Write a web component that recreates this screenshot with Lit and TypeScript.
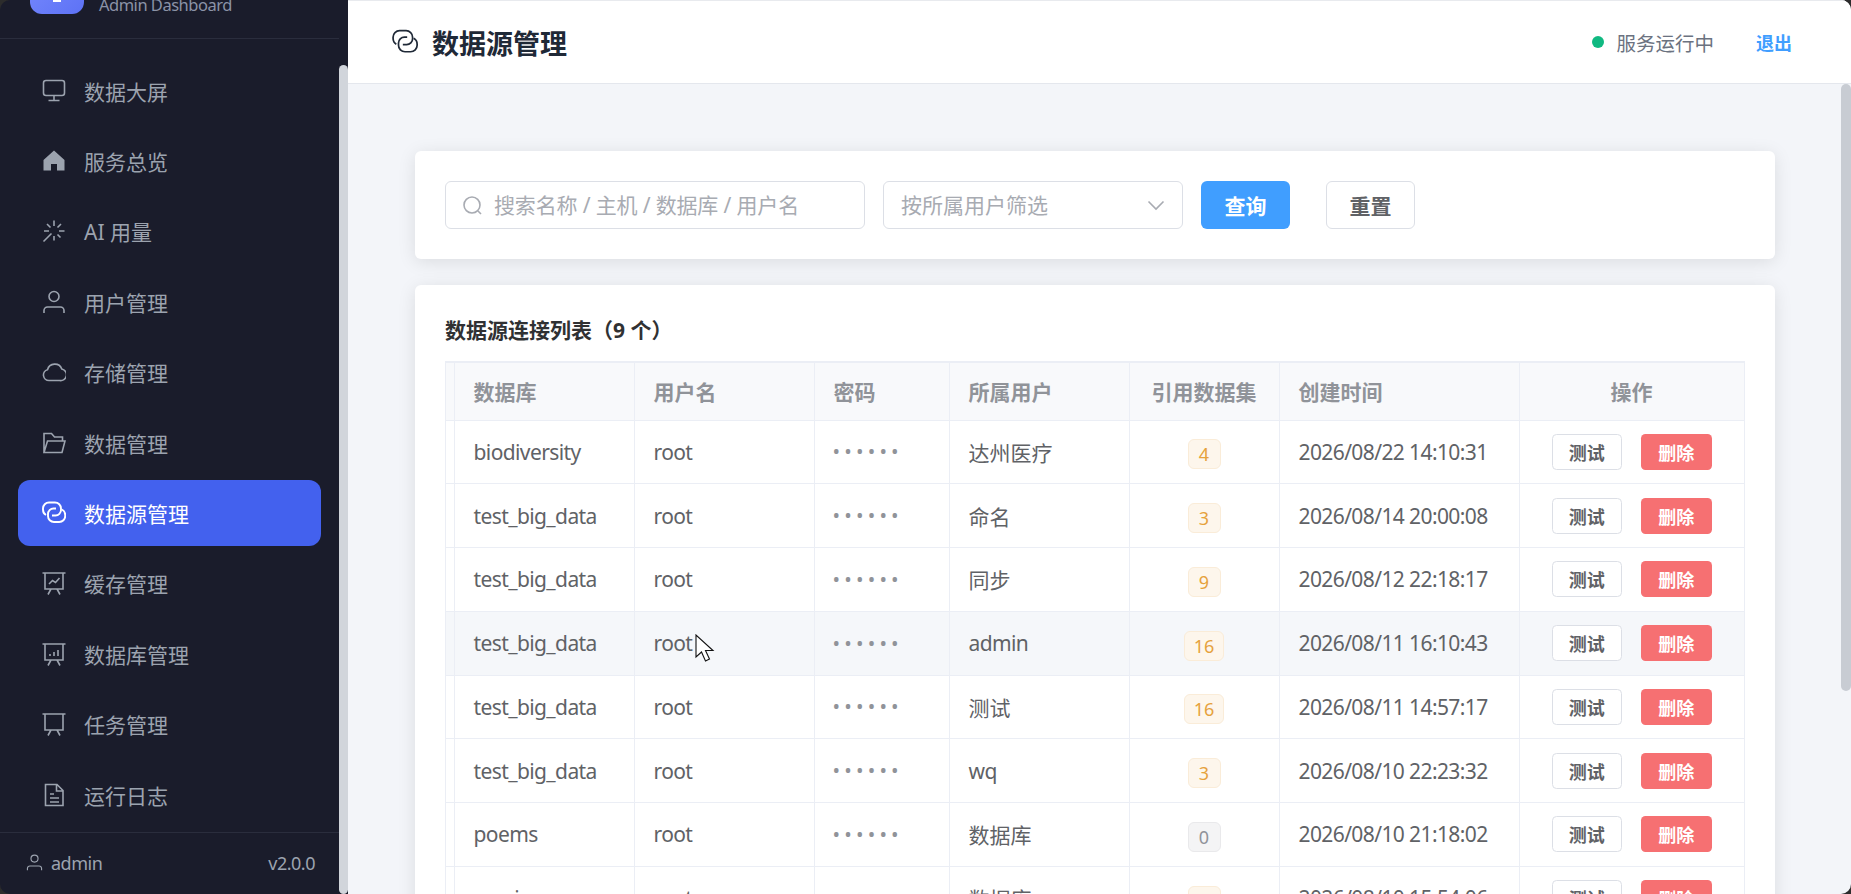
import { LitElement, html, css, svg } from 'lit';
import { customElement } from 'lit/decorators.js';

const ICONS: Record<string, unknown> = {
  screen: svg`<rect x="1.5" y="1.5" width="21" height="15" rx="2.5"/><path d="M12 16.5V21M6.5 21.5h11"/>`,
  home: svg`<path class="solid" d="M12 1.5 22.5 11v10.5H15V15H9v6.5H1.5V11z"/>`,
  spark: svg`<path d="M12 1.5V7M12 17v4.5M17 12h5.5M2 12h5M15.5 8.5 19 5M5 5l3.5 3.500M15.500 15.500 18.500 18.500M9.500 14.500 1.500 22.500"/>`,
  user: svg`<circle cx="12" cy="6.5" r="5"/><path d="M2 23v-2.500a3.500 3.500 0 0 1 3.500-3.500h13a3.500 3.500 0 0 1 3.500 3.500V23"/>`,
  cloud: svg`<path d="M7 20.500a5.500 5.500 0 0 1-1.500-10.800A7.500 7.500 0 0 1 19.800 9 5.800 5.800 0 0 1 17.500 20.500z"/>`,
  folder: svg`<path d="M2 21.500V2.500h7.500l3 3.500H20.500v4M2 21.500h18l3-11.500H5.500z"/>`,
  link: svg`<path d="M4 14C2 13 1 11 1 8.500v-1a6 6 0 0 1 6-6h6a6 6 0 0 1 6 6V9a5.500 5.500 0 0 1-5.500 5.500H10"/><path d="M20 8.500c2 1 3.200 3 3.200 5.500v1a6 6 0 0 1-6 6H12a6 6 0 0 1-6-6v-2a5.500 5.500 0 0 1 5.500-5.500H14"/>`,
  chart: svg`<path d="M.5 2h23M3 2v16h18V2M9 18l-3 5.500M15 18l3 5.500M7 13l3.500-3.500 3 2L17.500 7"/>`,
  bars: svg`<path d="M.5 2h23M3 2v16h18V2M9 18l-3 5.500M15 18l3 5.500M8 14v-2M12 14v-4M16 14V8"/>`,
  board: svg`<path d="M.5 2h23M3 2v16h18V2M9 18l-3 5.500M15 18l3 5.500"/>`,
  doc: svg`<path d="M3.500 1.500H15l6 6v15H3.500zM14.500 1.500v6.500H21M8 11h4M8 15h9M8 19h9"/>`,
};

function icon(name: string, size = 24) {
  return html`<svg class="icon" width=${size} height=${size} viewBox="0 0 24 24">${ICONS[name]}</svg>`;
}

const NAV = [
  ['screen', '数据大屏'],
  ['home', '服务总览'],
  ['spark', 'AI 用量'],
  ['user', '用户管理'],
  ['cloud', '存储管理'],
  ['folder', '数据管理'],
  ['link', '数据源管理'],
  ['chart', '缓存管理'],
  ['bars', '数据库管理'],
  ['board', '任务管理'],
  ['doc', '运行日志'],
];

const ROWS = [
  ['biodiversity', '达州医疗', 4, '2026/08/22 14:10:31'],
  ['test_big_data', '命名', 3, '2026/08/14 20:00:08'],
  ['test_big_data', '同步', 9, '2026/08/12 22:18:17'],
  ['test_big_data', 'admin', 16, '2026/08/11 16:10:43'],
  ['test_big_data', '测试', 16, '2026/08/11 14:57:17'],
  ['test_big_data', 'wq', 3, '2026/08/10 22:23:32'],
  ['poems', '数据库', 0, '2026/08/10 21:18:02'],
  ['music', '数据库', 2, '2026/08/10 15:54:06'],
];

@customElement('app-root')
export class AppRoot extends LitElement {
  static styles = css`
    :host {
      display: block;
      height: 100vh;
      overflow: hidden;
      background: #2c2c2c;
      font-family: 'Noto Sans', 'Noto Sans CJK SC', sans-serif;
    }
    .shell {
      position: relative;
      display: flex;
      height: 100%;
      border-radius: 10px;
      overflow: hidden;
    }
    .icon {
      flex: none;
      fill: none;
      stroke: currentColor;
      stroke-width: 1.6;
    }
    .icon .solid {
      fill: currentColor;
      stroke: none;
    }
    .latin {
      letter-spacing: -0.6px;
    }

    /* sidebar */
    .side {
      flex: none;
      width: 348px;
      display: flex;
      flex-direction: column;
      background: #1a1c2b;
      color: #9ca3af;
    }
    .brand {
      flex: none;
      box-sizing: border-box;
      width: 339px;
      height: 39px;
      display: flex;
      align-items: flex-end;
      gap: 15px;
      padding: 0 30px 24px;
      border-bottom: 1px solid #2a2d3d;
      overflow: hidden;
    }
    .logo {
      flex: none;
      width: 54px;
      height: 54px;
      display: flex;
      align-items: flex-end;
      justify-content: center;
      border-radius: 12px;
      background: linear-gradient(135deg, #7a8cff, #5d72f5);
    }
    .logo i {
      display: block;
      width: 8px;
      height: 12px;
      margin-bottom: 12px;
      background: #fff;
    }
    .sub {
      font-size: 16.5px;
      line-height: 20px;
      margin-bottom: -1px;
      letter-spacing: -0.5px;
      white-space: nowrap;
      color: #8b93a7;
    }
    .nav {
      flex: 1;
      padding: 18.6px 18px 0;
      width: 303px;
    }
    .item {
      height: 66px;
      margin-bottom: 4.4px;
      display: flex;
      align-items: center;
      gap: 18px;
      padding-left: 24px;
      border-radius: 12px;
      font-size: 21px;
    }
    .item.active {
      background: #4361ee;
      color: #fff;
    }
    .item.active .icon {
      stroke-width: 1.9;
    }
    .foot {
      flex: none;
      box-sizing: border-box;
      width: 339px;
      height: 62px;
      display: flex;
      align-items: center;
      justify-content: space-between;
      padding: 0 24px 2px 26px;
      border-top: 1px solid #2a2d3d;
      font-size: 18px;
      letter-spacing: -0.5px;
    }
    .who {
      display: flex;
      align-items: center;
      gap: 8px;
    }

    /* main */
    .main {
      flex: 1;
      min-width: 0;
      display: flex;
      flex-direction: column;
      background: #f3f5f9;
    }
    .top {
      flex: none;
      box-sizing: border-box;
      height: 84px;
      display: flex;
      align-items: center;
      padding: 0 59px 0 44px;
      background: #fff;
      border-top: 1px solid #e8eaee;
      border-bottom: 1px solid #e4e7ed;
    }
    .title {
      display: flex;
      align-items: center;
      gap: 14px;
      color: #1f2937;
      font-size: 27px;
      font-weight: 700;
    }
    .status {
      margin-left: auto;
      display: flex;
      align-items: center;
      gap: 12px;
      font-size: 19.5px;
      color: #6b7280;
    }
    .dot {
      width: 12px;
      height: 12px;
      border-radius: 50%;
      background: #10b981;
    }
    .logout {
      margin-left: 42px;
      font-size: 18px;
      font-weight: 700;
      color: #409eff;
    }
    .content {
      flex: 1;
      min-height: 0;
      overflow: hidden;
      padding: 67px 76px 0 67px;
    }
    .card {
      background: #fff;
      border-radius: 6px;
      box-shadow: 0 3px 18px rgba(0, 0, 0, 0.1);
      padding: 30px;
    }
    .filters {
      display: flex;
      gap: 18px;
      margin-bottom: 26px;
    }
    .field {
      box-sizing: border-box;
      height: 48px;
      display: flex;
      align-items: center;
      border: 1.5px solid #dcdfe6;
      border-radius: 6px;
      font-size: 21px;
      line-height: 44px;
      color: #a8abb2;
    }
    .search {
      width: 420px;
      padding-left: 17px;
      gap: 12px;
      letter-spacing: -0.15px;
    }
    .select {
      width: 300px;
      padding: 0 17px;
      justify-content: space-between;
    }
    .btn {
      box-sizing: border-box;
      height: 48px;
      width: 89px;
      display: flex;
      align-items: center;
      justify-content: center;
      border-radius: 6px;
      font-size: 21px;
      font-weight: 700;
    }
    .primary {
      background: #409eff;
      color: #fff;
    }
    .plain {
      margin-left: 18px;
      background: #fff;
      color: #606266;
      border: 1.5px solid #dcdfe6;
    }
    .list-title {
      font-size: 21px;
      line-height: 30px;
      font-weight: 700;
      color: #303133;
      margin-bottom: 16px;
    }
    .table {
      border-top: 2px solid #ebeef5;
      border-left: 1.5px solid #ebeef5;
      font-size: 21px;
      color: #606266;
    }
    .row {
      display: grid;
      grid-template-columns: 8.5px 180px 180px 135px 180px 150px 240px 225px;
      height: 63.75px;
      box-sizing: border-box;
    }
    .row.head {
      height: 57.5px;
      background: #f8f9fb;
      color: #909399;
      font-weight: 700;
    }
    .row.hover {
      background: #f5f7fa;
    }
    .cell {
      box-sizing: border-box;
      display: flex;
      align-items: center;
      padding: 0 19px;
      white-space: nowrap;
      border-right: 1.5px solid #ebeef5;
      border-bottom: 1.5px solid #ebeef5;
    }
    .cell.stub {
      padding: 0;
    }
    .cell.center {
      justify-content: center;
    }
    .dots {
      margin-left: -1px;
      color: #909399;
      letter-spacing: 4.2px;
      font-size: 20px;
    }
    .tag {
      box-sizing: border-box;
      height: 30px;
      min-width: 33px;
      margin-top: 5px;
      padding: 0 9px;
      display: flex;
      align-items: center;
      justify-content: center;
      border: 1.5px solid #faecd8;
      border-radius: 6px;
      background: #fdf6ec;
      color: #e6a23c;
      font-size: 18px;
    }
    .tag.zero {
      border-color: #e9e9eb;
      background: #f4f4f5;
      color: #909399;
    }
    .ops {
      gap: 19px;
      padding: 0;
    }
    .mini {
      box-sizing: border-box;
      width: 70.5px;
      height: 36px;
      display: flex;
      align-items: center;
      justify-content: center;
      border-radius: 4.5px;
      font-size: 18px;
      font-weight: 700;
    }
    .test {
      background: #fff;
      border: 1.5px solid #dcdfe6;
      color: #606266;
    }
    .del {
      background: #f67072;
      color: #fff;
    }

    /* overlays: scrollbar thumbs and the mouse pointer */
    .thumb {
      position: absolute;
      background: #d1d5db;
      border-radius: 5px;
    }
    .thumb.left {
      left: 339px;
      top: 65px;
      width: 9px;
      height: 829px;
    }
    .thumb.right {
      left: 1841px;
      top: 84px;
      width: 10px;
      height: 607px;
      background: #c8ccd3;
    }
    .pointer {
      position: absolute;
      left: 695px;
      top: 634px;
    }
  `;

  render() {
    return html`
      <div class="shell">
        <aside class="side">
          <div class="brand">
            <div class="logo"><i></i></div>
            <div class="sub">Admin Dashboard</div>
          </div>
          <nav class="nav">
            ${NAV.map(
              ([name, label]) => html`
                <div class="item ${label === '数据源管理' ? 'active' : ''}">${icon(name)}<span>${label}</span></div>
              `,
            )}
          </nav>
          <div class="foot">
            <span class="who">${icon('user', 17)}admin</span>
            <span>v2.0.0</span>
          </div>
        </aside>
        <main class="main">
          <header class="top">
            <div class="title">${icon('link', 26)}数据源管理</div>
            <div class="status"><span class="dot"></span>服务运行中</div>
            <div class="logout">退出</div>
          </header>
          <div class="content">
            <section class="card filters">
              <div class="field search">
                <svg class="icon" width="19" height="19" viewBox="0 0 19 19"><circle cx="9" cy="9" r="8"/><path d="M15 15l3 3"/></svg>
                搜索名称 / 主机 / 数据库 / 用户名
              </div>
              <div class="field select">
                按所属用户筛选
                <svg class="icon" width="18" height="18" viewBox="0 0 18 18"><path d="M1.500 5.500 9 13l7.500-7.500"/></svg>
              </div>
              <div class="btn primary">查询</div>
              <div class="btn plain">重置</div>
            </section>
            <section class="card">
              <div class="list-title">数据源连接列表（9 个）</div>
              <div class="table">
                <div class="row head">
                  <div class="cell stub"></div>
                  <div class="cell">数据库</div>
                  <div class="cell">用户名</div>
                  <div class="cell">密码</div>
                  <div class="cell">所属用户</div>
                  <div class="cell center">引用数据集</div>
                  <div class="cell">创建时间</div>
                  <div class="cell center">操作</div>
                </div>
                ${ROWS.map(
                  ([db, owner, refs, time], i) => html`
                    <div class="row ${i === 3 ? 'hover' : ''}">
                      <div class="cell stub"></div>
                      <div class="cell latin">${db}</div>
                      <div class="cell latin">root</div>
                      <div class="cell"><span class="dots">••••••</span></div>
                      <div class="cell ${/^[a-z]+$/.test(String(owner)) ? 'latin' : ''}">${owner}</div>
                      <div class="cell center"><span class="tag ${refs === 0 ? 'zero' : ''}">${refs}</span></div>
                      <div class="cell latin">${time}</div>
                      <div class="cell center ops">
                        <span class="mini test">测试</span>
                        <span class="mini del">删除</span>
                      </div>
                    </div>
                  `,
                )}
              </div>
            </section>
          </div>
        </main>
        <div class="thumb left"></div>
        <div class="thumb right"></div>
        <svg class="pointer" width="20" height="30" viewBox="0 0 20 30">
          <path d="M1 1v22l5.500-5 4 9 4-2-4-8.500H18z" fill="#fff" stroke="#111" stroke-width="1.100"/>
        </svg>
      </div>
    `;
  }
}

declare global {
  interface HTMLElementTagNameMap {
    'app-root': AppRoot;
  }
}
